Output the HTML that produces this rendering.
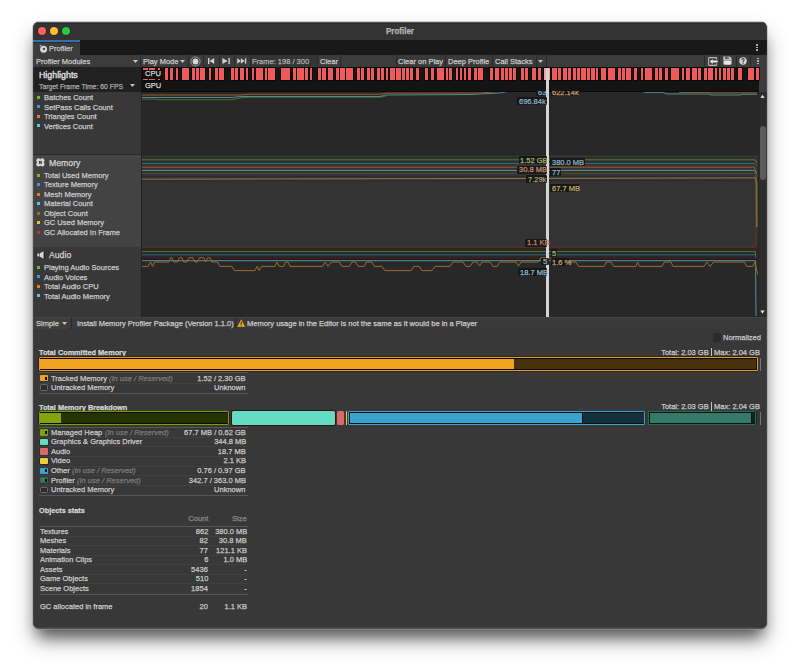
<!DOCTYPE html>
<html><head><meta charset="utf-8">
<style>
*{margin:0;padding:0;box-sizing:border-box}
html,body{width:800px;height:672px;overflow:hidden;background:#ffffff}
body{font-family:"Liberation Sans",sans-serif;font-size:7.5px;color:#c4c4c4;position:relative}
.a{position:absolute}
.t{position:absolute;white-space:nowrap;line-height:1;-webkit-text-stroke:0.25px currentColor}
#shadow{position:absolute;left:33px;top:22px;width:734px;height:606.5px;border-radius:6px;background:#383838;box-shadow:0 0 0 1px rgba(150,150,150,.45),0 12px 14px -5px rgba(0,0,0,.45),0 12px 22px -2px rgba(0,0,0,.42)}
#rim{position:absolute;left:33px;top:22px;width:734px;height:606.5px;border-radius:6px;box-shadow:inset 0 0 0 1px rgba(255,255,255,.05),inset 0 -1.5px 0 0 rgba(255,255,255,.1)}
#win{position:absolute;left:0;top:0;width:800px;height:672px;clip-path:inset(22px 33px 43.5px 33px round 6px)}
</style></head>
<body>
<div id="shadow"></div>
<div id="win">
<div class="a" style="left:33px;top:22px;width:734.00px;height:18.00px;background:#333333;"></div>
<div class="a" style="left:33px;top:22px;width:734.00px;height:1.20px;background:#4a4a4a;"></div>
<div class="a" style="left:33px;top:23.2px;width:734.00px;height:0.80px;background:#2a2a2a;"></div>
<div class="a" style="left:37.8px;top:26.8px;width:8.4px;height:8.4px;border-radius:50%;background:#fe5f57;box-shadow:0 0 0 0.6px rgba(0,0,0,.35)"></div>
<div class="a" style="left:49.8px;top:26.8px;width:8.4px;height:8.4px;border-radius:50%;background:#febc2e;box-shadow:0 0 0 0.6px rgba(0,0,0,.35)"></div>
<div class="a" style="left:61.8px;top:26.8px;width:8.4px;height:8.4px;border-radius:50%;background:#28c840;box-shadow:0 0 0 0.6px rgba(0,0,0,.35)"></div>
<div class="t" style="top:27.38px;font-size:8.53px;color:#b4b4b4;transform:scaleX(0.9375);transform-origin:50% 0;font-weight:bold;left:200.00px;width:400px;text-align:center;">Profiler</div>
<div class="a" style="left:33px;top:40px;width:734.00px;height:15.00px;background:#191919;"></div>
<div class="a" style="left:33px;top:40px;width:47.00px;height:15.00px;background:#3c3c3c;"></div>
<div class="a" style="left:33px;top:40.2px;width:47.00px;height:1.70px;background:#3470b0;"></div>
<div class="a" style="left:33px;top:41.9px;width:47.00px;height:0.60px;background:#2e2a22;"></div>
<svg class="a" style="left:38.6px;top:44.2px" width="9" height="9" viewBox="0 0 9 9"><circle cx="4.6" cy="5.2" r="3.5" fill="#d4d4d4"/><circle cx="4.9" cy="4.9" r="1.1" fill="#3a3a3a"/><path d="M0.9 1.1 L2.4 2.4" stroke="#c8c8c8" stroke-width="1.2"/></svg>
<div class="t" style="top:44.83px;font-size:8.00px;color:#c8c8c8;transform:scaleX(0.9375);transform-origin:0 0;left:48.60px;">Profiler</div>
<div class="a" style="left:756.2px;top:44.2px;width:1.6px;height:1.6px;border-radius:50%;background:#c8c8c8"></div>
<div class="a" style="left:756.2px;top:46.6px;width:1.6px;height:1.6px;border-radius:50%;background:#c8c8c8"></div>
<div class="a" style="left:756.2px;top:49.0px;width:1.6px;height:1.6px;border-radius:50%;background:#c8c8c8"></div>
<div class="a" style="left:33px;top:55px;width:734.00px;height:12.00px;background:#3c3c3c;"></div>
<div class="a" style="left:33px;top:66.5px;width:734.00px;height:1.00px;background:#1a1a1a;"></div>
<div class="t" style="top:57.93px;font-size:8.00px;color:#cbcbcb;transform:scaleX(0.9375);transform-origin:0 0;left:36.00px;">Profiler Modules</div>
<svg class="a" style="left:133.2px;top:59.5px" width="5" height="3" viewBox="0 0 5 3"><path d="M0 0 L5 0 L2.5 3 Z" fill="#c4c4c4"/></svg>
<div class="a" style="left:140px;top:55px;width:1.00px;height:11.50px;background:#2a2a2a;"></div>
<div class="t" style="top:57.93px;font-size:8.00px;color:#cbcbcb;transform:scaleX(0.9375);transform-origin:0 0;left:142.70px;">Play Mode</div>
<svg class="a" style="left:180.3px;top:59.5px" width="5" height="3" viewBox="0 0 5 3"><path d="M0 0 L5 0 L2.5 3 Z" fill="#c4c4c4"/></svg>
<div class="a" style="left:187.5px;top:55px;width:1.00px;height:11.50px;background:#2a2a2a;"></div>
<svg class="a" style="left:189.6px;top:55.5px" width="11" height="11" viewBox="0 0 11 11"><circle cx="5.5" cy="5.5" r="4.6" fill="none" stroke="#b4b4b4" stroke-width="0.75"/><circle cx="5.5" cy="5.5" r="2.9" fill="#d8d8d8"/></svg>
<div class="a" style="left:203px;top:55px;width:1.00px;height:11.50px;background:#2a2a2a;"></div>
<svg class="a" style="left:207px;top:57px" width="9" height="8" viewBox="0 0 9 8"><rect x="1" y="1" width="1.4" height="6" fill="#d0d0d0"/><path d="M7.2 1 L2.6 4 L7.2 7 Z" fill="#d0d0d0"/></svg>
<div class="a" style="left:218.5px;top:55px;width:1.00px;height:11.50px;background:#2a2a2a;"></div>
<svg class="a" style="left:222px;top:57px" width="9" height="8" viewBox="0 0 9 8"><path d="M0.4 1 L5.6 4 L0.4 7 Z" fill="#d0d0d0"/><rect x="6.4" y="1" width="1.4" height="6" fill="#d0d0d0"/></svg>
<div class="a" style="left:234px;top:55px;width:1.00px;height:11.50px;background:#2a2a2a;"></div>
<svg class="a" style="left:237px;top:57px" width="10" height="8" viewBox="0 0 10 8"><path d="M0.2 1.3 L3.9 4 L0.2 6.7 Z" fill="#d0d0d0"/><path d="M3.9 1.3 L7.6 4 L3.9 6.7 Z" fill="#d0d0d0"/><rect x="7.9" y="1.3" width="1.3" height="5.4" fill="#d0d0d0"/></svg>
<div class="a" style="left:249.5px;top:55px;width:1.00px;height:11.50px;background:#2a2a2a;"></div>
<div class="a" style="left:250.5px;top:55px;width:66.50px;height:11.50px;background:#353535;"></div>
<div class="t" style="top:57.93px;font-size:8.00px;color:#b0b0b0;transform:scaleX(0.9375);transform-origin:0 0;left:251.70px;">Frame: 198 / 300</div>
<div class="a" style="left:317px;top:55px;width:1.00px;height:11.50px;background:#2a2a2a;"></div>
<div class="t" style="top:57.93px;font-size:8.00px;color:#cbcbcb;transform:scaleX(0.9375);transform-origin:0 0;left:320.20px;">Clear</div>
<div class="a" style="left:339.5px;top:55px;width:1.00px;height:11.50px;background:#2a2a2a;"></div>
<div class="a" style="left:395.5px;top:55px;width:150.00px;height:11.50px;background:#3a3a3a;"></div>
<div class="a" style="left:395.5px;top:55px;width:1.00px;height:11.50px;background:#2a2a2a;"></div>
<div class="t" style="top:57.93px;font-size:8.00px;color:#cbcbcb;transform:scaleX(0.9375);transform-origin:0 0;left:397.50px;">Clear on Play</div>
<div class="a" style="left:445px;top:55px;width:1.00px;height:11.50px;background:#2a2a2a;"></div>
<div class="t" style="top:57.93px;font-size:8.00px;color:#cbcbcb;transform:scaleX(0.9375);transform-origin:0 0;left:448.00px;">Deep Profile</div>
<div class="a" style="left:492px;top:55px;width:1.00px;height:11.50px;background:#2a2a2a;"></div>
<div class="t" style="top:57.93px;font-size:8.00px;color:#cbcbcb;transform:scaleX(0.9375);transform-origin:0 0;left:494.90px;">Call Stacks</div>
<div class="a" style="left:535.5px;top:55px;width:1.00px;height:11.50px;background:#2a2a2a;"></div>
<svg class="a" style="left:537.8px;top:59.5px" width="5" height="3" viewBox="0 0 5 3"><path d="M0 0 L5 0 L2.5 3 Z" fill="#c4c4c4"/></svg>
<div class="a" style="left:545.5px;top:55px;width:1.00px;height:11.50px;background:#2a2a2a;"></div>
<div class="a" style="left:704px;top:55px;width:1.00px;height:11.50px;background:#2a2a2a;"></div>
<div class="a" style="left:719px;top:55px;width:1.00px;height:11.50px;background:#2a2a2a;"></div>
<div class="a" style="left:735.5px;top:55px;width:1.00px;height:11.50px;background:#2a2a2a;"></div>
<div class="a" style="left:750px;top:55px;width:1.00px;height:11.50px;background:#2a2a2a;"></div>
<svg class="a" style="left:707.8px;top:56.8px" width="10" height="9" viewBox="0 0 10 9"><path d="M8.6 2.6 V1.4 Q8.6 0.6 7.8 0.6 H1.4 Q0.6 0.6 0.6 1.4 V7.6 Q0.6 8.4 1.4 8.4 H7.8 Q8.6 8.4 8.6 7.6 V6.4" fill="none" stroke="#b8b8b8" stroke-width="1.1"/><path d="M1.8 4.5 L4.6 2 V3.6 H9.6 V5.4 H4.6 V7 Z" fill="#ececec"/></svg>
<svg class="a" style="left:722.6px;top:56.4px" width="9" height="9" viewBox="0 0 9 9"><path d="M0.4 0.4 H6.8 L8.6 2.2 V8.6 H0.4 Z" fill="#cfcfcf"/><rect x="2.2" y="0.4" width="4" height="2.6" fill="#505050"/><rect x="4.6" y="0.9" width="1" height="1.6" fill="#cfcfcf"/><rect x="1.6" y="4.6" width="5.8" height="4" fill="#e8e8e8"/><path d="M0.4 4.2 H8.6" stroke="#606060" stroke-width="0.6"/></svg>
<svg class="a" style="left:738.6px;top:57px" width="8" height="8" viewBox="0 0 8 8"><circle cx="4" cy="4" r="3.7" fill="#d4d4d4"/><path d="M2.7 3 Q2.7 1.6 4 1.6 Q5.3 1.6 5.3 2.9 Q5.3 3.7 4.1 4.1 V5" fill="none" stroke="#2a2a2a" stroke-width="1"/><rect x="3.55" y="5.6" width="1.1" height="1.1" fill="#2a2a2a"/></svg>
<div class="a" style="left:757.2px;top:57.8px;width:1.6px;height:1.6px;border-radius:50%;background:#c8c8c8"></div>
<div class="a" style="left:757.2px;top:60.199999999999996px;width:1.6px;height:1.6px;border-radius:50%;background:#c8c8c8"></div>
<div class="a" style="left:757.2px;top:62.599999999999994px;width:1.6px;height:1.6px;border-radius:50%;background:#c8c8c8"></div>
<div class="a" style="left:33px;top:67px;width:108.00px;height:25.00px;background:#212121;"></div>
<div class="a" style="left:141px;top:67px;width:618.00px;height:25.00px;background:#141414;"></div>
<div class="a" style="left:141px;top:90.8px;width:618.00px;height:1.20px;background:#0a0a0a;"></div>
<div class="a" style="left:759px;top:67px;width:8.00px;height:25.00px;background:#3c3c3c;"></div>
<div class="t" style="top:69.97px;font-size:9.60px;color:#dadada;transform:scaleX(0.9200);transform-origin:0 0;left:39.00px;-webkit-text-stroke:0.45px #dadada;">Highlights</div>
<div class="t" style="top:83.11px;font-size:7.31px;color:#a8a8a8;transform:scaleX(0.9375);transform-origin:0 0;left:39.00px;">Target Frame Time: 60 FPS</div>
<svg class="a" style="left:130.0px;top:84.0px" width="5" height="3" viewBox="0 0 5 3"><path d="M0 0 L5 0 L2.5 3 Z" fill="#c4c4c4"/></svg>
<div class="a" style="left:142.5px;top:68px;width:5.00px;height:12.00px;background:#f05a5a;box-shadow:0 0 0 0.7px #060606"></div>
<div class="a" style="left:149.0px;top:68px;width:5.50px;height:12.00px;background:#f05a5a;box-shadow:0 0 0 0.7px #060606"></div>
<div class="a" style="left:157.5px;top:68px;width:2.00px;height:12.00px;background:#f05a5a;box-shadow:0 0 0 0.7px #060606"></div>
<div class="a" style="left:165.0px;top:68px;width:3.00px;height:12.00px;background:#f05a5a;box-shadow:0 0 0 0.7px #060606"></div>
<div class="a" style="left:169.5px;top:68px;width:3.00px;height:12.00px;background:#f05a5a;box-shadow:0 0 0 0.7px #060606"></div>
<div class="a" style="left:175.5px;top:68px;width:2.50px;height:12.00px;background:#f05a5a;box-shadow:0 0 0 0.7px #060606"></div>
<div class="a" style="left:182.0px;top:68px;width:6.50px;height:12.00px;background:#f05a5a;box-shadow:0 0 0 0.7px #060606"></div>
<div class="a" style="left:192.0px;top:68px;width:3.00px;height:12.00px;background:#f05a5a;box-shadow:0 0 0 0.7px #060606"></div>
<div class="a" style="left:196.0px;top:68px;width:3.00px;height:12.00px;background:#f05a5a;box-shadow:0 0 0 0.7px #060606"></div>
<div class="a" style="left:200.0px;top:68px;width:5.00px;height:12.00px;background:#f05a5a;box-shadow:0 0 0 0.7px #060606"></div>
<div class="a" style="left:209.0px;top:68px;width:2.00px;height:12.00px;background:#f05a5a;box-shadow:0 0 0 0.7px #060606"></div>
<div class="a" style="left:215.0px;top:68px;width:2.50px;height:12.00px;background:#f05a5a;box-shadow:0 0 0 0.7px #060606"></div>
<div class="a" style="left:219.0px;top:68px;width:5.00px;height:12.00px;background:#f05a5a;box-shadow:0 0 0 0.7px #060606"></div>
<div class="a" style="left:231.0px;top:68px;width:3.50px;height:12.00px;background:#f05a5a;box-shadow:0 0 0 0.7px #060606"></div>
<div class="a" style="left:235.0px;top:68px;width:3.00px;height:12.00px;background:#f05a5a;box-shadow:0 0 0 0.7px #060606"></div>
<div class="a" style="left:239.5px;top:68px;width:4.50px;height:12.00px;background:#f05a5a;box-shadow:0 0 0 0.7px #060606"></div>
<div class="a" style="left:245.5px;top:68px;width:2.50px;height:12.00px;background:#f05a5a;box-shadow:0 0 0 0.7px #060606"></div>
<div class="a" style="left:252.0px;top:68px;width:2.00px;height:12.00px;background:#f05a5a;box-shadow:0 0 0 0.7px #060606"></div>
<div class="a" style="left:255.5px;top:68px;width:7.00px;height:12.00px;background:#f05a5a;box-shadow:0 0 0 0.7px #060606"></div>
<div class="a" style="left:264.5px;top:68px;width:2.50px;height:12.00px;background:#f05a5a;box-shadow:0 0 0 0.7px #060606"></div>
<div class="a" style="left:268.0px;top:68px;width:7.00px;height:12.00px;background:#f05a5a;box-shadow:0 0 0 0.7px #060606"></div>
<div class="a" style="left:280.5px;top:68px;width:9.00px;height:12.00px;background:#f05a5a;box-shadow:0 0 0 0.7px #060606"></div>
<div class="a" style="left:293.0px;top:68px;width:2.50px;height:12.00px;background:#f05a5a;box-shadow:0 0 0 0.7px #060606"></div>
<div class="a" style="left:297.0px;top:68px;width:7.00px;height:12.00px;background:#f05a5a;box-shadow:0 0 0 0.7px #060606"></div>
<div class="a" style="left:305.0px;top:68px;width:3.00px;height:12.00px;background:#f05a5a;box-shadow:0 0 0 0.7px #060606"></div>
<div class="a" style="left:309.5px;top:68px;width:2.50px;height:12.00px;background:#f05a5a;box-shadow:0 0 0 0.7px #060606"></div>
<div class="a" style="left:317.5px;top:68px;width:3.00px;height:12.00px;background:#f05a5a;box-shadow:0 0 0 0.7px #060606"></div>
<div class="a" style="left:322.0px;top:68px;width:4.00px;height:12.00px;background:#f05a5a;box-shadow:0 0 0 0.7px #060606"></div>
<div class="a" style="left:327.5px;top:68px;width:5.00px;height:12.00px;background:#f05a5a;box-shadow:0 0 0 0.7px #060606"></div>
<div class="a" style="left:336.0px;top:68px;width:3.00px;height:12.00px;background:#f05a5a;box-shadow:0 0 0 0.7px #060606"></div>
<div class="a" style="left:340.0px;top:68px;width:5.00px;height:12.00px;background:#f05a5a;box-shadow:0 0 0 0.7px #060606"></div>
<div class="a" style="left:346.0px;top:68px;width:7.00px;height:12.00px;background:#f05a5a;box-shadow:0 0 0 0.7px #060606"></div>
<div class="a" style="left:357.0px;top:68px;width:2.50px;height:12.00px;background:#f05a5a;box-shadow:0 0 0 0.7px #060606"></div>
<div class="a" style="left:360.5px;top:68px;width:3.50px;height:12.00px;background:#f05a5a;box-shadow:0 0 0 0.7px #060606"></div>
<div class="a" style="left:367.0px;top:68px;width:3.00px;height:12.00px;background:#f05a5a;box-shadow:0 0 0 0.7px #060606"></div>
<div class="a" style="left:371.0px;top:68px;width:3.00px;height:12.00px;background:#f05a5a;box-shadow:0 0 0 0.7px #060606"></div>
<div class="a" style="left:377.0px;top:68px;width:3.00px;height:12.00px;background:#f05a5a;box-shadow:0 0 0 0.7px #060606"></div>
<div class="a" style="left:381.0px;top:68px;width:3.00px;height:12.00px;background:#f05a5a;box-shadow:0 0 0 0.7px #060606"></div>
<div class="a" style="left:385.5px;top:68px;width:2.50px;height:12.00px;background:#f05a5a;box-shadow:0 0 0 0.7px #060606"></div>
<div class="a" style="left:390.0px;top:68px;width:5.00px;height:12.00px;background:#f05a5a;box-shadow:0 0 0 0.7px #060606"></div>
<div class="a" style="left:396.0px;top:68px;width:4.50px;height:12.00px;background:#f05a5a;box-shadow:0 0 0 0.7px #060606"></div>
<div class="a" style="left:402.0px;top:68px;width:3.00px;height:12.00px;background:#f05a5a;box-shadow:0 0 0 0.7px #060606"></div>
<div class="a" style="left:406.0px;top:68px;width:3.00px;height:12.00px;background:#f05a5a;box-shadow:0 0 0 0.7px #060606"></div>
<div class="a" style="left:410.0px;top:68px;width:3.00px;height:12.00px;background:#f05a5a;box-shadow:0 0 0 0.7px #060606"></div>
<div class="a" style="left:416.0px;top:68px;width:3.00px;height:12.00px;background:#f05a5a;box-shadow:0 0 0 0.7px #060606"></div>
<div class="a" style="left:424.5px;top:68px;width:3.00px;height:12.00px;background:#f05a5a;box-shadow:0 0 0 0.7px #060606"></div>
<div class="a" style="left:431.0px;top:68px;width:2.50px;height:12.00px;background:#f05a5a;box-shadow:0 0 0 0.7px #060606"></div>
<div class="a" style="left:437.0px;top:68px;width:7.00px;height:12.00px;background:#f05a5a;box-shadow:0 0 0 0.7px #060606"></div>
<div class="a" style="left:445.5px;top:68px;width:2.00px;height:12.00px;background:#f05a5a;box-shadow:0 0 0 0.7px #060606"></div>
<div class="a" style="left:449.0px;top:68px;width:3.00px;height:12.00px;background:#f05a5a;box-shadow:0 0 0 0.7px #060606"></div>
<div class="a" style="left:455.5px;top:68px;width:2.50px;height:12.00px;background:#f05a5a;box-shadow:0 0 0 0.7px #060606"></div>
<div class="a" style="left:460.0px;top:68px;width:2.00px;height:12.00px;background:#f05a5a;box-shadow:0 0 0 0.7px #060606"></div>
<div class="a" style="left:464.0px;top:68px;width:2.00px;height:12.00px;background:#f05a5a;box-shadow:0 0 0 0.7px #060606"></div>
<div class="a" style="left:467.5px;top:68px;width:3.00px;height:12.00px;background:#f05a5a;box-shadow:0 0 0 0.7px #060606"></div>
<div class="a" style="left:474.0px;top:68px;width:2.50px;height:12.00px;background:#f05a5a;box-shadow:0 0 0 0.7px #060606"></div>
<div class="a" style="left:478.0px;top:68px;width:5.00px;height:12.00px;background:#f05a5a;box-shadow:0 0 0 0.7px #060606"></div>
<div class="a" style="left:490.0px;top:68px;width:3.00px;height:12.00px;background:#f05a5a;box-shadow:0 0 0 0.7px #060606"></div>
<div class="a" style="left:494.5px;top:68px;width:4.50px;height:12.00px;background:#f05a5a;box-shadow:0 0 0 0.7px #060606"></div>
<div class="a" style="left:500.5px;top:68px;width:3.00px;height:12.00px;background:#f05a5a;box-shadow:0 0 0 0.7px #060606"></div>
<div class="a" style="left:505.0px;top:68px;width:2.50px;height:12.00px;background:#f05a5a;box-shadow:0 0 0 0.7px #060606"></div>
<div class="a" style="left:509.0px;top:68px;width:3.00px;height:12.00px;background:#f05a5a;box-shadow:0 0 0 0.7px #060606"></div>
<div class="a" style="left:513.0px;top:68px;width:3.00px;height:12.00px;background:#f05a5a;box-shadow:0 0 0 0.7px #060606"></div>
<div class="a" style="left:521.0px;top:68px;width:3.00px;height:12.00px;background:#f05a5a;box-shadow:0 0 0 0.7px #060606"></div>
<div class="a" style="left:525.0px;top:68px;width:3.00px;height:12.00px;background:#f05a5a;box-shadow:0 0 0 0.7px #060606"></div>
<div class="a" style="left:531.5px;top:68px;width:4.50px;height:12.00px;background:#f05a5a;box-shadow:0 0 0 0.7px #060606"></div>
<div class="a" style="left:538.0px;top:68px;width:2.50px;height:12.00px;background:#f05a5a;box-shadow:0 0 0 0.7px #060606"></div>
<div class="a" style="left:543.5px;top:68px;width:6.00px;height:12.00px;background:#f6a0a0;box-shadow:0 0 0 0.7px #060606"></div>
<div class="a" style="left:552.0px;top:68px;width:5.00px;height:12.00px;background:#f05a5a;box-shadow:0 0 0 0.7px #060606"></div>
<div class="a" style="left:558.0px;top:68px;width:2.50px;height:12.00px;background:#f05a5a;box-shadow:0 0 0 0.7px #060606"></div>
<div class="a" style="left:562.5px;top:68px;width:4.50px;height:12.00px;background:#f05a5a;box-shadow:0 0 0 0.7px #060606"></div>
<div class="a" style="left:568.0px;top:68px;width:3.00px;height:12.00px;background:#f05a5a;box-shadow:0 0 0 0.7px #060606"></div>
<div class="a" style="left:573.0px;top:68px;width:2.50px;height:12.00px;background:#f05a5a;box-shadow:0 0 0 0.7px #060606"></div>
<div class="a" style="left:577.0px;top:68px;width:2.50px;height:12.00px;background:#f05a5a;box-shadow:0 0 0 0.7px #060606"></div>
<div class="a" style="left:581.0px;top:68px;width:4.50px;height:12.00px;background:#f05a5a;box-shadow:0 0 0 0.7px #060606"></div>
<div class="a" style="left:587.0px;top:68px;width:3.00px;height:12.00px;background:#f05a5a;box-shadow:0 0 0 0.7px #060606"></div>
<div class="a" style="left:591.0px;top:68px;width:3.50px;height:12.00px;background:#f05a5a;box-shadow:0 0 0 0.7px #060606"></div>
<div class="a" style="left:595.5px;top:68px;width:2.50px;height:12.00px;background:#f05a5a;box-shadow:0 0 0 0.7px #060606"></div>
<div class="a" style="left:601.0px;top:68px;width:5.00px;height:12.00px;background:#f05a5a;box-shadow:0 0 0 0.7px #060606"></div>
<div class="a" style="left:608.0px;top:68px;width:7.00px;height:12.00px;background:#f05a5a;box-shadow:0 0 0 0.7px #060606"></div>
<div class="a" style="left:618.0px;top:68px;width:2.50px;height:12.00px;background:#f05a5a;box-shadow:0 0 0 0.7px #060606"></div>
<div class="a" style="left:622.0px;top:68px;width:3.00px;height:12.00px;background:#f05a5a;box-shadow:0 0 0 0.7px #060606"></div>
<div class="a" style="left:626.0px;top:68px;width:5.00px;height:12.00px;background:#f05a5a;box-shadow:0 0 0 0.7px #060606"></div>
<div class="a" style="left:634.0px;top:68px;width:3.00px;height:12.00px;background:#f05a5a;box-shadow:0 0 0 0.7px #060606"></div>
<div class="a" style="left:640.5px;top:68px;width:2.50px;height:12.00px;background:#f05a5a;box-shadow:0 0 0 0.7px #060606"></div>
<div class="a" style="left:645.0px;top:68px;width:6.50px;height:12.00px;background:#f05a5a;box-shadow:0 0 0 0.7px #060606"></div>
<div class="a" style="left:655.0px;top:68px;width:2.50px;height:12.00px;background:#f05a5a;box-shadow:0 0 0 0.7px #060606"></div>
<div class="a" style="left:659.0px;top:68px;width:3.00px;height:12.00px;background:#f05a5a;box-shadow:0 0 0 0.7px #060606"></div>
<div class="a" style="left:665.0px;top:68px;width:3.00px;height:12.00px;background:#f05a5a;box-shadow:0 0 0 0.7px #060606"></div>
<div class="a" style="left:671.0px;top:68px;width:7.50px;height:12.00px;background:#f05a5a;box-shadow:0 0 0 0.7px #060606"></div>
<div class="a" style="left:682.0px;top:68px;width:2.00px;height:12.00px;background:#f05a5a;box-shadow:0 0 0 0.7px #060606"></div>
<div class="a" style="left:685.5px;top:68px;width:4.50px;height:12.00px;background:#f05a5a;box-shadow:0 0 0 0.7px #060606"></div>
<div class="a" style="left:692.0px;top:68px;width:5.00px;height:12.00px;background:#f05a5a;box-shadow:0 0 0 0.7px #060606"></div>
<div class="a" style="left:698.0px;top:68px;width:3.00px;height:12.00px;background:#f05a5a;box-shadow:0 0 0 0.7px #060606"></div>
<div class="a" style="left:704.0px;top:68px;width:3.00px;height:12.00px;background:#f05a5a;box-shadow:0 0 0 0.7px #060606"></div>
<div class="a" style="left:708.0px;top:68px;width:5.00px;height:12.00px;background:#f05a5a;box-shadow:0 0 0 0.7px #060606"></div>
<div class="a" style="left:715.0px;top:68px;width:2.00px;height:12.00px;background:#f05a5a;box-shadow:0 0 0 0.7px #060606"></div>
<div class="a" style="left:719.0px;top:68px;width:2.00px;height:12.00px;background:#f05a5a;box-shadow:0 0 0 0.7px #060606"></div>
<div class="a" style="left:723.0px;top:68px;width:3.00px;height:12.00px;background:#f05a5a;box-shadow:0 0 0 0.7px #060606"></div>
<div class="a" style="left:727.0px;top:68px;width:3.00px;height:12.00px;background:#f05a5a;box-shadow:0 0 0 0.7px #060606"></div>
<div class="a" style="left:731.0px;top:68px;width:3.00px;height:12.00px;background:#f05a5a;box-shadow:0 0 0 0.7px #060606"></div>
<div class="a" style="left:737.5px;top:68px;width:4.50px;height:12.00px;background:#f05a5a;box-shadow:0 0 0 0.7px #060606"></div>
<div class="a" style="left:748.0px;top:68px;width:6.00px;height:12.00px;background:#f05a5a;box-shadow:0 0 0 0.7px #060606"></div>
<div class="a" style="left:756.0px;top:68px;width:2.50px;height:12.00px;background:#f05a5a;box-shadow:0 0 0 0.7px #060606"></div>
<div class="a" style="left:142px;top:69.5px;width:20.00px;height:9.00px;background:#0e0e0e;border-radius:1px"></div>
<div class="t" style="top:70.43px;font-size:8.00px;color:#d8d8d8;transform:scaleX(0.9375);transform-origin:0 0;left:145.00px;">CPU</div>
<div class="a" style="left:142px;top:81.8px;width:20.00px;height:7.80px;background:#0e0e0e;border-radius:1px"></div>
<div class="t" style="top:81.93px;font-size:8.00px;color:#d8d8d8;transform:scaleX(0.9375);transform-origin:0 0;left:145.00px;">GPU</div>
<!--CHARTS-->
<div class="a" style="left:33px;top:92px;width:108.00px;height:62.00px;background:#383838;"></div>
<div class="a" style="left:33px;top:154px;width:108.00px;height:1.00px;background:#2a2a2a;"></div>
<div class="a" style="left:33px;top:155px;width:108.00px;height:92.00px;background:#434343;"></div>
<div class="a" style="left:33px;top:155.6px;width:107.00px;height:1.00px;background:#4a4a4a;"></div>
<div class="a" style="left:33px;top:247px;width:108.00px;height:69.50px;background:#383838;"></div>
<div class="a" style="left:140.5px;top:92px;width:1.00px;height:224.50px;background:#232323;"></div>
<div class="a" style="left:37px;top:95.8px;width:3.00px;height:3.00px;background:#84b21a;"></div>
<div class="t" style="top:94.23px;font-size:8.00px;color:#cbcbcb;transform:scaleX(0.9375);transform-origin:0 0;left:43.80px;">Batches Count</div>
<div class="a" style="left:37px;top:105.3px;width:3.00px;height:3.00px;background:#3a9ad4;"></div>
<div class="t" style="top:103.73px;font-size:8.00px;color:#cbcbcb;transform:scaleX(0.9375);transform-origin:0 0;left:43.80px;">SetPass Calls Count</div>
<div class="a" style="left:37px;top:114.8px;width:3.00px;height:3.00px;background:#e8801a;"></div>
<div class="t" style="top:113.23px;font-size:8.00px;color:#cbcbcb;transform:scaleX(0.9375);transform-origin:0 0;left:43.80px;">Triangles Count</div>
<div class="a" style="left:37px;top:124.30000000000001px;width:3.00px;height:3.00px;background:#56c8dc;"></div>
<div class="t" style="top:122.73px;font-size:8.00px;color:#cbcbcb;transform:scaleX(0.9375);transform-origin:0 0;left:43.80px;">Vertices Count</div>
<svg class="a" style="left:36.2px;top:157.9px" width="9" height="9" viewBox="0 0 9 9"><g fill="#d6d6d6"><circle cx="2.5" cy="2.5" r="2.2"/><circle cx="6.3" cy="2.5" r="2.2"/><circle cx="2.5" cy="6.3" r="2.2"/><circle cx="6.3" cy="6.3" r="2.2"/><rect x="1.4" y="1.4" width="6" height="6"/></g><g fill="#1a1a1a"><circle cx="3.7" cy="3.7" r="0.8"/><circle cx="5.1" cy="3.7" r="0.8"/><circle cx="3.7" cy="5.1" r="0.8"/><circle cx="5.1" cy="5.1" r="0.8"/></g></svg>
<div class="t" style="top:158.94px;font-size:9.28px;color:#d4d4d4;transform:scaleX(0.9375);transform-origin:0 0;left:48.60px;">Memory</div>
<div class="a" style="left:37px;top:173.5px;width:3.00px;height:3.00px;background:#84b21a;"></div>
<div class="t" style="top:171.93px;font-size:8.00px;color:#cbcbcb;transform:scaleX(0.9375);transform-origin:0 0;left:43.80px;">Total Used Memory</div>
<div class="a" style="left:37px;top:183.0px;width:3.00px;height:3.00px;background:#3a9ad4;"></div>
<div class="t" style="top:181.43px;font-size:8.00px;color:#cbcbcb;transform:scaleX(0.9375);transform-origin:0 0;left:43.80px;">Texture Memory</div>
<div class="a" style="left:37px;top:192.5px;width:3.00px;height:3.00px;background:#e8801a;"></div>
<div class="t" style="top:190.93px;font-size:8.00px;color:#cbcbcb;transform:scaleX(0.9375);transform-origin:0 0;left:43.80px;">Mesh Memory</div>
<div class="a" style="left:37px;top:202.0px;width:3.00px;height:3.00px;background:#56c8dc;"></div>
<div class="t" style="top:200.43px;font-size:8.00px;color:#cbcbcb;transform:scaleX(0.9375);transform-origin:0 0;left:43.80px;">Material Count</div>
<div class="a" style="left:37px;top:211.5px;width:3.00px;height:3.00px;background:#8c7a10;"></div>
<div class="t" style="top:209.93px;font-size:8.00px;color:#cbcbcb;transform:scaleX(0.9375);transform-origin:0 0;left:43.80px;">Object Count</div>
<div class="a" style="left:37px;top:221.0px;width:3.00px;height:3.00px;background:#e8c41a;"></div>
<div class="t" style="top:219.43px;font-size:8.00px;color:#cbcbcb;transform:scaleX(0.9375);transform-origin:0 0;left:43.80px;">GC Used Memory</div>
<div class="a" style="left:37px;top:230.5px;width:3.00px;height:3.00px;background:#b8381a;"></div>
<div class="t" style="top:228.93px;font-size:8.00px;color:#cbcbcb;transform:scaleX(0.9375);transform-origin:0 0;left:43.80px;">GC Allocated In Frame</div>
<svg class="a" style="left:36.6px;top:250.9px" width="8" height="8" viewBox="0 0 8 8"><rect x="0.4" y="2.6" width="1.6" height="2.8" fill="#e0e0e0"/><path d="M2.6 2.4 L6.6 0.2 V7.8 L2.6 5.6 Z" fill="#d8d8d8"/><rect x="6.9" y="0.6" width="0.8" height="6.8" fill="#1a1a1a"/></svg>
<div class="t" style="top:251.14px;font-size:9.28px;color:#d4d4d4;transform:scaleX(0.9375);transform-origin:0 0;left:48.60px;">Audio</div>
<div class="a" style="left:37px;top:265.8px;width:3.00px;height:3.00px;background:#84b21a;"></div>
<div class="t" style="top:264.23px;font-size:8.00px;color:#cbcbcb;transform:scaleX(0.9375);transform-origin:0 0;left:43.80px;">Playing Audio Sources</div>
<div class="a" style="left:37px;top:275.3px;width:3.00px;height:3.00px;background:#3a9ad4;"></div>
<div class="t" style="top:273.73px;font-size:8.00px;color:#cbcbcb;transform:scaleX(0.9375);transform-origin:0 0;left:43.80px;">Audio Voices</div>
<div class="a" style="left:37px;top:284.8px;width:3.00px;height:3.00px;background:#e8801a;"></div>
<div class="t" style="top:283.23px;font-size:8.00px;color:#cbcbcb;transform:scaleX(0.9375);transform-origin:0 0;left:43.80px;">Total Audio CPU</div>
<div class="a" style="left:37px;top:294.3px;width:3.00px;height:3.00px;background:#56c8dc;"></div>
<div class="t" style="top:292.73px;font-size:8.00px;color:#cbcbcb;transform:scaleX(0.9375);transform-origin:0 0;left:43.80px;">Total Audio Memory</div>
<div class="a" style="left:141.5px;top:92px;width:616.50px;height:62.00px;background:#282828;"></div>
<div class="a" style="left:141.5px;top:154px;width:616.50px;height:1.00px;background:#232323;"></div>
<div class="a" style="left:141.5px;top:155px;width:616.50px;height:92.00px;background:#333333;"></div>
<div class="a" style="left:141.5px;top:247px;width:616.50px;height:69.50px;background:#282828;"></div>
<div class="a" style="left:758px;top:92px;width:9.00px;height:224.50px;background:#2c2c2c;"></div>
<div class="a" style="left:758px;top:92px;width:1.00px;height:224.50px;background:#252525;"></div>
<svg class="a" style="left:760.4px;top:93.9px" width="5" height="4.4" viewBox="0 0 5 4.4"><path d="M0.1 4.1 L4.9 4.1 L2.5 0.4 Z" fill="#e8e8e8" stroke="#111" stroke-width="0.3"/></svg>
<svg class="a" style="left:760.4px;top:310.2px" width="5" height="4.4" viewBox="0 0 5 4.4"><path d="M0.1 0.3 L4.9 0.3 L2.5 4 Z" fill="#e8e8e8" stroke="#111" stroke-width="0.3"/></svg>
<div class="a" style="left:760px;top:125.5px;width:6.00px;height:54.20px;background:#5c5c5c;border-radius:3px"></div>
<svg class="a" style="left:0;top:0" width="800" height="672" viewBox="0 0 800 672"><defs><clipPath id="c1"><rect x="141" y="92" width="617" height="62"/></clipPath></defs><g clip-path="url(#c1)"><polyline points="142,99.1 156,99.1 158,99.7 232,99.7 240,98 248,97.2 380,97.2 386,96" fill="none" stroke="#52701e" stroke-width="1" stroke-linejoin="miter"/><polyline points="142,97.5 232,97.5 240,96.5 380,96.5 386,95 470,94.5 500,93 510,91" fill="none" stroke="#4a8a9a" stroke-width="1" stroke-linejoin="miter"/><polyline points="142,95 240,95 248,94.3 380,94.3 386,93.2 480,93 505,91" fill="none" stroke="#9a5c2a" stroke-width="1" stroke-linejoin="miter"/><polyline points="640,91.2 646,92.4 663,92.4 667,94 708,94 712,95 740,95 743,94.3 757,94.3" fill="none" stroke="#4a8a9a" stroke-width="1" stroke-linejoin="miter"/><polyline points="679,92.3 708,92.3 711,92.9 757,92.9" fill="none" stroke="#9a6a28" stroke-width="1" stroke-linejoin="miter"/></g><polyline points="142,158.2 754,158.2" fill="none" stroke="#2a2a38" stroke-width="0.9" stroke-linejoin="miter"/><polyline points="142,161.6 754,161.6" fill="none" stroke="#2a2a38" stroke-width="0.9" stroke-linejoin="miter"/><polyline points="142,176.6 754,176.6" fill="none" stroke="#2a2a38" stroke-width="0.9" stroke-linejoin="miter"/><polyline points="142,180.6 754,180.6" fill="none" stroke="#2a2a38" stroke-width="0.9" stroke-linejoin="miter"/><polyline points="142,159.8 755,159.8 757,163" fill="none" stroke="#5a7a24" stroke-width="1" stroke-linejoin="miter"/><polyline points="142,163.5 755,163.5 757,166" fill="none" stroke="#33667c" stroke-width="1" stroke-linejoin="miter"/><polyline points="142,167.2 754.5,167.2 756,172 756.3,227" fill="none" stroke="#9a5e2c" stroke-width="1" stroke-linejoin="miter"/><polyline points="142,170.4 754,170.4 757,173" fill="none" stroke="#4e92a4" stroke-width="1" stroke-linejoin="miter"/><polyline points="142,173.4 755,173.4 757,176" fill="none" stroke="#544e26" stroke-width="1" stroke-linejoin="miter"/><polyline points="142,179.2 500,178.5 755,177.8 756.8,183 757,227" fill="none" stroke="#8e7a32" stroke-width="1" stroke-linejoin="miter"/><polyline points="142,247.2 755.8,247.2 756,227" fill="none" stroke="#6a2e20" stroke-width="1" stroke-linejoin="miter"/><polyline points="142,251.6 755.5,251.6 755.5,256" fill="none" stroke="#56762a" stroke-width="1" stroke-linejoin="miter"/><polyline points="142,254.8 755.5,254.8 756,258" fill="none" stroke="#33667c" stroke-width="1" stroke-linejoin="miter"/><polyline points="142,259.3 757,259.3" fill="none" stroke="#3e0c0c" stroke-width="1" stroke-linejoin="miter"/><polyline points="142,260.7 755.6,260.7 756,316" fill="none" stroke="#4e94a4" stroke-width="1" stroke-linejoin="miter"/><polyline points="142,266.4 148,266.4 150.6,262 152.5,266.4 154.4,262 168.75,262 170.6,257.8 171.9,257.8 173.75,262 177.5,262 179.4,257.8 181.9,257.8 183.75,262 186.9,262 188.75,257.8 193,257.8 195,262 197.5,262 199.4,257.8 203.75,257.8 205.6,262 207.5,257.8 210,257.8 211.9,262 217.5,262 220,266.4 231.9,266.4 234.4,270.6 255,270.6 257.25,266.2 259,270.4 261.5,266.4 275,266.4 276.9,262 279.4,266.4 283.75,266.4 285.6,262 288.1,262 290,266.4 322.5,266.4 325,262 328.1,266.4 331.25,262 339.4,262 341.9,266.4 349.4,266.4 351.9,262 355.6,262 358.1,266.4 364.4,266.4 366.25,262 371.9,262 374.4,266.4 381.9,266.4 385,270.6 411.25,270.6 413.75,266.4 419.4,266.4 421.9,270.6 432,270.6 435,266.4 450,266.4 453,262 463,262 466,266.4 470,266.4 473,262 477,262 479.5,266 482,262 490,262 493,266.4 497,266.4 500,262 516,262 518.5,266 521,262 538,262 541,257.8 549,257.8 560,262 576,262 578.5,266.4 604,266.4 606.5,262 611,262 613.5,266.4 636,266.4 637.5,262 639.5,266.4 662,266.4 664.5,262 671,262 673,266.4 704,266.4 706.8,262 710.2,266.4 713.6,262 744.6,262 746.7,266.4 752.8,266.4 754.9,262 757.7,274.4" fill="none" stroke="#a06a28" stroke-width="1" stroke-linejoin="miter"/></svg>
<div class="a" style="left:546.1px;top:67.5px;width:3.00px;height:249.00px;background:#d4d4d4;"></div>
<div class="a" style="left:517px;top:97.3px;width:29.90px;height:8.10px;background:rgba(22,22,22,0.92);border-radius:1px"></div>
<div class="t" style="top:98.33px;font-size:8.00px;color:#8cb4c0;transform:scaleX(0.9375);transform-origin:0 0;left:518.50px;">696.84k</div>
<div class="a" style="left:0;top:90.8px;width:800px;height:10px;overflow:hidden"><div class="a" style="left:0;top:-90.8px;width:800px;height:672px">
<div class="a" style="left:536px;top:88px;width:10.00px;height:8.00px;background:rgba(22,22,22,0.92);border-radius:1px"></div>
<div class="t" style="top:88.93px;font-size:8.00px;color:#8cb4c0;transform:scaleX(0.9375);transform-origin:0 0;left:537.50px;">63.</div>
<div class="a" style="left:550.5px;top:88px;width:28.50px;height:8.00px;background:rgba(22,22,22,0.92);border-radius:1px"></div>
<div class="t" style="top:88.93px;font-size:8.00px;color:#c8a070;transform:scaleX(0.9375);transform-origin:0 0;left:552.00px;">622.14k</div>
</div></div>
<div class="a" style="left:518.75px;top:156.25px;width:27.75px;height:7.50px;background:rgba(22,22,22,0.92);border-radius:1px"></div>
<div class="t" style="top:156.68px;font-size:8.00px;color:#a4b46c;transform:scaleX(0.9375);transform-origin:0 0;left:520.25px;">1.52 GB</div>
<div class="a" style="left:550px;top:158px;width:35.00px;height:8.00px;background:rgba(22,22,22,0.92);border-radius:1px"></div>
<div class="t" style="top:158.93px;font-size:8.00px;color:#90b0c4;transform:scaleX(0.9375);transform-origin:0 0;left:551.50px;">380.0 MB</div>
<div class="a" style="left:517px;top:165.5px;width:29.50px;height:8.00px;background:rgba(22,22,22,0.92);border-radius:1px"></div>
<div class="t" style="top:166.43px;font-size:8.00px;color:#c4906c;transform:scaleX(0.9375);transform-origin:0 0;left:518.50px;">30.8 MB</div>
<div class="a" style="left:550px;top:167.5px;width:10.60px;height:8.20px;background:rgba(22,22,22,0.92);border-radius:1px"></div>
<div class="t" style="top:168.63px;font-size:8.00px;color:#90bcc8;transform:scaleX(0.9375);transform-origin:0 0;left:551.50px;">77</div>
<div class="a" style="left:526px;top:175px;width:20.50px;height:8.00px;background:rgba(22,22,22,0.92);border-radius:1px"></div>
<div class="t" style="top:175.93px;font-size:8.00px;color:#a8a070;transform:scaleX(0.9375);transform-origin:0 0;left:527.50px;">7.29k</div>
<div class="a" style="left:550px;top:184.4px;width:29.00px;height:8.10px;background:rgba(22,22,22,0.92);border-radius:1px"></div>
<div class="t" style="top:185.43px;font-size:8.00px;color:#c0ac64;transform:scaleX(0.9375);transform-origin:0 0;left:551.50px;">67.7 MB</div>
<div class="a" style="left:525px;top:238.5px;width:21.90px;height:8.00px;background:rgba(22,22,22,0.92);border-radius:1px"></div>
<div class="t" style="top:239.43px;font-size:8.00px;color:#c4866c;transform:scaleX(0.9375);transform-origin:0 0;left:526.50px;">1.1 KB</div>
<div class="a" style="left:541.3px;top:257.9px;width:7.40px;height:7.50px;background:rgba(22,22,22,0.92);border-radius:1px"></div>
<div class="t" style="top:258.33px;font-size:8.00px;color:#90b0c4;transform:scaleX(0.9375);transform-origin:0 0;left:542.80px;">5</div>
<div class="a" style="left:518.2px;top:267.8px;width:29.20px;height:8.00px;background:rgba(22,22,22,0.92);border-radius:1px"></div>
<div class="t" style="top:268.73px;font-size:8.00px;color:#90bcc8;transform:scaleX(0.9375);transform-origin:0 0;left:519.70px;">18.7 MB</div>
<div class="a" style="left:550.5px;top:249px;width:6.00px;height:7.70px;background:rgba(22,22,22,0.92);border-radius:1px"></div>
<div class="t" style="top:249.63px;font-size:8.00px;color:#a8b46c;transform:scaleX(0.9375);transform-origin:0 0;left:552.00px;">5</div>
<div class="a" style="left:550.5px;top:258.2px;width:18.70px;height:8.30px;background:rgba(22,22,22,0.92);border-radius:1px"></div>
<div class="t" style="top:259.43px;font-size:8.00px;color:#c8a078;transform:scaleX(0.9375);transform-origin:0 0;left:552.00px;">1.6 %</div>
<!--HLFIX-->
<!--DETAIL-->
<div class="a" style="left:33px;top:316.5px;width:734.00px;height:0.70px;background:#232323;"></div>
<div class="a" style="left:33px;top:317.2px;width:734.00px;height:11.80px;background:#3a3a3a;"></div>
<div class="a" style="left:33px;top:317.2px;width:37.00px;height:11.60px;background:#3e3e3e;"></div>
<div class="a" style="left:33px;top:317.2px;width:734.00px;height:0.80px;background:#444444;"></div>
<div class="a" style="left:33px;top:328.6px;width:734.00px;height:0.80px;background:#2a2a2a;"></div>
<div class="t" style="top:319.93px;font-size:8.00px;color:#cbcbcb;transform:scaleX(0.9375);transform-origin:0 0;left:36.00px;">Simple</div>
<svg class="a" style="left:61.8px;top:321.5px" width="5" height="3" viewBox="0 0 5 3"><path d="M0 0 L5 0 L2.5 3 Z" fill="#c4c4c4"/></svg>
<div class="a" style="left:70.5px;top:317.2px;width:1.00px;height:11.40px;background:#2a2a2a;"></div>
<div class="t" style="top:319.93px;font-size:8.00px;color:#cbcbcb;transform:scaleX(0.9375);transform-origin:0 0;left:76.70px;">Install Memory Profiler Package (Version 1.1.0)</div>
<div class="a" style="left:234.5px;top:317.2px;width:1.00px;height:11.40px;background:#2a2a2a;"></div>
<svg class="a" style="left:236.8px;top:318.6px" width="8.4" height="8.6" viewBox="0 0 8.4 8.6"><path d="M4.2 0.3 Q4.6 0.3 4.9 0.9 L8.2 7.6 Q8.3 8.3 7.6 8.3 H0.8 Q0.1 8.3 0.2 7.6 L3.5 0.9 Q3.8 0.3 4.2 0.3 Z" fill="#e8a818" stroke="#1c2a3a" stroke-width="0.4"/><rect x="3.75" y="2.6" width="0.9" height="3.2" fill="#2a2010"/><rect x="3.75" y="6.4" width="0.9" height="0.9" fill="#2a2010"/></svg>
<div class="t" style="top:319.93px;font-size:8.00px;color:#cbcbcb;transform:scaleX(0.9375);transform-origin:0 0;left:246.80px;">Memory usage in the Editor is not the same as it would be in a Player</div>
<div class="a" style="left:33px;top:329.2px;width:734.00px;height:299.80px;background:#383838;"></div>
<div class="a" style="left:713px;top:333.4px;width:8.00px;height:8.40px;background:#2b2b2b;border-radius:1.5px"></div>
<div class="t" style="top:333.53px;font-size:8.00px;color:#cbcbcb;transform:scaleX(0.9375);transform-origin:0 0;left:722.60px;">Normalized</div>
<div class="t" style="top:349.36px;font-size:7.79px;color:#d6d6d6;transform:scaleX(0.9375);transform-origin:0 0;font-weight:bold;left:39.40px;">Total Committed Memory</div>
<div class="t" style="top:348.93px;font-size:8.00px;color:#cbcbcb;transform:scaleX(0.9375);transform-origin:100% 0;right:91.20px;">Total: 2.03 GB</div>
<div class="a" style="left:711.1px;top:348.2px;width:0.90px;height:8.40px;background:#c8c8c8;"></div>
<div class="t" style="top:348.93px;font-size:8.00px;color:#cbcbcb;transform:scaleX(0.9375);transform-origin:100% 0;right:39.70px;">Max: 2.04 GB</div>
<div class="a" style="left:38px;top:356px;width:720.20px;height:16.00px;background:#1c2640;border-radius:2px"></div>
<div class="a" style="left:38.75px;top:357px;width:718.75px;height:14.00px;background:#f09c1c;border-radius:1.5px"></div>
<div class="a" style="left:39.75px;top:358px;width:716.75px;height:12.00px;background:#0c0a06;"></div>
<div class="a" style="left:40.25px;top:358.8px;width:473.35px;height:10.40px;background:#f4a222;"></div>
<div class="a" style="left:514.4px;top:358.8px;width:241.60px;height:10.40px;background:#47300c;"></div>
<div class="a" style="left:759.5px;top:358px;width:1.50px;height:12.50px;background:#6c7888;"></div>
<div class="a" style="left:38.5px;top:372.3px;width:209.00px;height:1.00px;background:#565656;"></div>
<div class="a" style="left:40.1px;top:374.8px;width:8.00px;height:6.40px;background:#f0a020;border-radius:1px"></div>
<div class="a" style="left:41.1px;top:375.8px;width:3.50px;height:4.40px;background:#f4a222;"></div>
<div class="a" style="left:44.7px;top:376.5px;width:2.20px;height:3.10px;background:#111;"></div>
<div class="t" style="top:374.53px;font-size:8.00px;color:#cbcbcb;transform:scaleX(0.9375);transform-origin:0 0;left:51.25px;">Tracked Memory</div>
<div class="t" style="top:374.53px;font-size:8.00px;color:#7c7c7c;transform:scaleX(0.9375);transform-origin:0 0;font-style:italic;left:109.43px;">(In use / Reserved)</div>
<div class="t" style="top:374.53px;font-size:8.00px;color:#cbcbcb;transform:scaleX(0.9375);transform-origin:100% 0;right:554.20px;">1.52 / 2.30 GB</div>
<div class="a" style="left:38.5px;top:382.6px;width:209.00px;height:1.00px;background:#404040;"></div>
<div class="a" style="left:40.1px;top:384.4px;width:8.00px;height:6.40px;background:#2c2c2c;border-radius:1.5px;border:1px solid #6a6a6a"></div>
<div class="t" style="top:384.33px;font-size:8.00px;color:#cbcbcb;transform:scaleX(0.9375);transform-origin:0 0;left:51.25px;">Untracked Memory</div>
<div class="t" style="top:384.33px;font-size:8.00px;color:#cbcbcb;transform:scaleX(0.9375);transform-origin:100% 0;right:554.20px;">Unknown</div>
<div class="a" style="left:38.5px;top:392.5px;width:209.00px;height:1.00px;background:#565656;"></div>
<div class="t" style="top:403.61px;font-size:7.79px;color:#d6d6d6;transform:scaleX(0.9375);transform-origin:0 0;font-weight:bold;left:39.40px;">Total Memory Breakdown</div>
<div class="t" style="top:402.93px;font-size:8.00px;color:#cbcbcb;transform:scaleX(0.9375);transform-origin:100% 0;right:91.20px;">Total: 2.03 GB</div>
<div class="a" style="left:711.1px;top:402.2px;width:0.90px;height:8.40px;background:#c8c8c8;"></div>
<div class="t" style="top:402.93px;font-size:8.00px;color:#cbcbcb;transform:scaleX(0.9375);transform-origin:100% 0;right:39.70px;">Max: 2.04 GB</div>
<div class="a" style="left:38.4px;top:410.6px;width:191.60px;height:14.80px;background:#2a1a3a;border-radius:2px"></div>
<div class="a" style="left:38.75px;top:411px;width:190.65px;height:14.00px;background:#7c9c10;border-radius:1.5px"></div>
<div class="a" style="left:39.75px;top:412px;width:188.65px;height:12.00px;background:#0c0e04;"></div>
<div class="a" style="left:40.25px;top:412.8px;width:20.35px;height:10.40px;background:#84a40e;"></div>
<div class="a" style="left:61.4px;top:412.8px;width:166.60px;height:10.40px;background:#283400;"></div>
<div class="a" style="left:231.2px;top:410.4px;width:104.70px;height:15.20px;background:#3a1414;border-radius:2px"></div>
<div class="a" style="left:231.6px;top:411px;width:103.90px;height:14.00px;background:#64dcc4;border-radius:1.5px"></div>
<div class="a" style="left:336.6px;top:410.6px;width:7.80px;height:14.80px;background:#103a3a;border-radius:2px"></div>
<div class="a" style="left:337px;top:411px;width:7.00px;height:14.00px;background:#d86a6a;border-radius:1.5px"></div>
<div class="a" style="left:345.7px;top:411px;width:1.50px;height:14.00px;background:#f0c830;"></div>
<div class="a" style="left:347.7px;top:410.6px;width:298.10px;height:14.80px;background:#3a2a1a;border-radius:2px"></div>
<div class="a" style="left:348.1px;top:411px;width:297.20px;height:14.00px;background:#3aa2d2;border-radius:1.5px"></div>
<div class="a" style="left:349.1px;top:412px;width:295.20px;height:12.00px;background:#0a1014;"></div>
<div class="a" style="left:349.6px;top:412.8px;width:232.70px;height:10.40px;background:#3aa2cc;"></div>
<div class="a" style="left:583.1px;top:412.8px;width:60.70px;height:10.40px;background:#13303c;"></div>
<div class="a" style="left:647.6px;top:410.6px;width:109.10px;height:14.80px;background:#0c2a22;border-radius:2px"></div>
<div class="a" style="left:648px;top:411px;width:108.30px;height:14.00px;background:#2c6a58;border-radius:1.5px"></div>
<div class="a" style="left:649px;top:412px;width:106.30px;height:12.00px;background:#0a1410;"></div>
<div class="a" style="left:649.5px;top:412.8px;width:101.50px;height:10.40px;background:#357a66;"></div>
<div class="a" style="left:751.8px;top:412.8px;width:3.00px;height:10.40px;background:#10241e;"></div>
<div class="a" style="left:759.5px;top:412px;width:1.50px;height:12.50px;background:#6c7888;"></div>
<div class="a" style="left:38.5px;top:426.6px;width:209.00px;height:1.00px;background:#565656;"></div>
<div class="a" style="left:40.1px;top:429.2px;width:8.00px;height:6.40px;background:#7c9c10;border-radius:1px"></div>
<div class="a" style="left:41.1px;top:430.2px;width:3.50px;height:4.40px;background:#84a40e;"></div>
<div class="a" style="left:44.7px;top:430.9px;width:2.20px;height:3.10px;background:#111;"></div>
<div class="t" style="top:428.73px;font-size:8.00px;color:#cbcbcb;transform:scaleX(0.9375);transform-origin:0 0;left:51.25px;">Managed Heap</div>
<div class="t" style="top:428.73px;font-size:8.00px;color:#7c7c7c;transform:scaleX(0.9375);transform-origin:0 0;font-style:italic;left:104.74px;">(In use / Reserved)</div>
<div class="t" style="top:428.73px;font-size:8.00px;color:#cbcbcb;transform:scaleX(0.9375);transform-origin:100% 0;right:554.20px;">67.7 MB / 0.62 GB</div>
<div class="a" style="left:38.5px;top:436.9px;width:209.00px;height:1.00px;background:#404040;"></div>
<div class="a" style="left:40.1px;top:438.8px;width:8.00px;height:6.40px;background:#64dcc4;border-radius:1px;box-shadow:0 0 0 .5px #3a1414"></div>
<div class="t" style="top:438.23px;font-size:8.00px;color:#cbcbcb;transform:scaleX(0.9375);transform-origin:0 0;left:51.25px;">Graphics &amp; Graphics Driver</div>
<div class="t" style="top:438.23px;font-size:8.00px;color:#cbcbcb;transform:scaleX(0.9375);transform-origin:100% 0;right:554.20px;">344.8 MB</div>
<div class="a" style="left:38.5px;top:446.4px;width:209.00px;height:1.00px;background:#404040;"></div>
<div class="a" style="left:40.1px;top:448.3px;width:8.00px;height:6.40px;background:#d86a6a;border-radius:1px;box-shadow:0 0 0 .5px #103a3a"></div>
<div class="t" style="top:447.83px;font-size:8.00px;color:#cbcbcb;transform:scaleX(0.9375);transform-origin:0 0;left:51.25px;">Audio</div>
<div class="t" style="top:447.83px;font-size:8.00px;color:#cbcbcb;transform:scaleX(0.9375);transform-origin:100% 0;right:554.20px;">18.7 MB</div>
<div class="a" style="left:38.5px;top:456px;width:209.00px;height:1.00px;background:#404040;"></div>
<div class="a" style="left:40.1px;top:457.9px;width:8.00px;height:6.40px;background:#f0cc40;border-radius:1px;box-shadow:0 0 0 .5px #101a3a"></div>
<div class="t" style="top:457.43px;font-size:8.00px;color:#cbcbcb;transform:scaleX(0.9375);transform-origin:0 0;left:51.25px;">Video</div>
<div class="t" style="top:457.43px;font-size:8.00px;color:#cbcbcb;transform:scaleX(0.9375);transform-origin:100% 0;right:554.20px;">2.1 KB</div>
<div class="a" style="left:38.5px;top:465.6px;width:209.00px;height:1.00px;background:#404040;"></div>
<div class="a" style="left:40.1px;top:467.5px;width:8.00px;height:6.40px;background:#3aa2d2;border-radius:1px"></div>
<div class="a" style="left:41.1px;top:468.5px;width:3.50px;height:4.40px;background:#3aa2cc;"></div>
<div class="a" style="left:44.7px;top:469.2px;width:2.20px;height:3.10px;background:#111;"></div>
<div class="t" style="top:467.03px;font-size:8.00px;color:#cbcbcb;transform:scaleX(0.9375);transform-origin:0 0;left:51.25px;">Other</div>
<div class="t" style="top:467.03px;font-size:8.00px;color:#7c7c7c;transform:scaleX(0.9375);transform-origin:0 0;font-style:italic;left:72.21px;">(In use / Reserved)</div>
<div class="t" style="top:467.03px;font-size:8.00px;color:#cbcbcb;transform:scaleX(0.9375);transform-origin:100% 0;right:554.20px;">0.76 / 0.97 GB</div>
<div class="a" style="left:38.5px;top:475.2px;width:209.00px;height:1.00px;background:#404040;"></div>
<div class="a" style="left:40.1px;top:477.1px;width:8.00px;height:6.40px;background:#2c6a58;border-radius:1px"></div>
<div class="a" style="left:41.1px;top:478.1px;width:3.50px;height:4.40px;background:#357a66;"></div>
<div class="a" style="left:44.7px;top:478.8px;width:2.20px;height:3.10px;background:#111;"></div>
<div class="t" style="top:476.63px;font-size:8.00px;color:#cbcbcb;transform:scaleX(0.9375);transform-origin:0 0;left:51.25px;">Profiler</div>
<div class="t" style="top:476.63px;font-size:8.00px;color:#7c7c7c;transform:scaleX(0.9375);transform-origin:0 0;font-style:italic;left:77.21px;">(In use / Reserved)</div>
<div class="t" style="top:476.63px;font-size:8.00px;color:#cbcbcb;transform:scaleX(0.9375);transform-origin:100% 0;right:554.20px;">342.7 / 363.0 MB</div>
<div class="a" style="left:38.5px;top:484.8px;width:209.00px;height:1.00px;background:#404040;"></div>
<div class="a" style="left:40.1px;top:486.6px;width:8.00px;height:6.40px;background:#2c2c2c;border-radius:1.5px;border:1px solid #6a6a6a"></div>
<div class="t" style="top:486.23px;font-size:8.00px;color:#cbcbcb;transform:scaleX(0.9375);transform-origin:0 0;left:51.25px;">Untracked Memory</div>
<div class="t" style="top:486.23px;font-size:8.00px;color:#cbcbcb;transform:scaleX(0.9375);transform-origin:100% 0;right:554.20px;">Unknown</div>
<div class="a" style="left:38.5px;top:494.6px;width:209.00px;height:1.00px;background:#565656;"></div>
<div class="t" style="top:507.21px;font-size:7.79px;color:#d6d6d6;transform:scaleX(0.9375);transform-origin:0 0;font-weight:bold;left:39.40px;">Objects stats</div>
<div class="t" style="top:515.23px;font-size:8.00px;color:#8a8a8a;transform:scaleX(0.9375);transform-origin:100% 0;right:592.00px;">Count</div>
<div class="t" style="top:515.23px;font-size:8.00px;color:#8a8a8a;transform:scaleX(0.9375);transform-origin:100% 0;right:553.00px;">Size</div>
<div class="a" style="left:39.5px;top:526.2px;width:208.50px;height:1.00px;background:#565656;"></div>
<div class="t" style="top:527.68px;font-size:8.00px;color:#cbcbcb;transform:scaleX(0.9375);transform-origin:0 0;left:40.00px;">Textures</div>
<div class="t" style="top:527.68px;font-size:8.00px;color:#cbcbcb;transform:scaleX(0.9375);transform-origin:100% 0;right:592.00px;">862</div>
<div class="t" style="top:527.68px;font-size:8.00px;color:#cbcbcb;transform:scaleX(0.9375);transform-origin:100% 0;right:553.00px;">380.0 MB</div>
<div class="a" style="left:39.5px;top:535.95px;width:208.50px;height:1.00px;background:#404040;"></div>
<div class="t" style="top:537.18px;font-size:8.00px;color:#cbcbcb;transform:scaleX(0.9375);transform-origin:0 0;left:40.00px;">Meshes</div>
<div class="t" style="top:537.18px;font-size:8.00px;color:#cbcbcb;transform:scaleX(0.9375);transform-origin:100% 0;right:592.00px;">82</div>
<div class="t" style="top:537.18px;font-size:8.00px;color:#cbcbcb;transform:scaleX(0.9375);transform-origin:100% 0;right:553.00px;">30.8 MB</div>
<div class="a" style="left:39.5px;top:545.45px;width:208.50px;height:1.00px;background:#404040;"></div>
<div class="t" style="top:546.68px;font-size:8.00px;color:#cbcbcb;transform:scaleX(0.9375);transform-origin:0 0;left:40.00px;">Materials</div>
<div class="t" style="top:546.68px;font-size:8.00px;color:#cbcbcb;transform:scaleX(0.9375);transform-origin:100% 0;right:592.00px;">77</div>
<div class="t" style="top:546.68px;font-size:8.00px;color:#cbcbcb;transform:scaleX(0.9375);transform-origin:100% 0;right:553.00px;">121.1 KB</div>
<div class="a" style="left:39.5px;top:554.95px;width:208.50px;height:1.00px;background:#404040;"></div>
<div class="t" style="top:556.18px;font-size:8.00px;color:#cbcbcb;transform:scaleX(0.9375);transform-origin:0 0;left:40.00px;">Animation Clips</div>
<div class="t" style="top:556.18px;font-size:8.00px;color:#cbcbcb;transform:scaleX(0.9375);transform-origin:100% 0;right:592.00px;">6</div>
<div class="t" style="top:556.18px;font-size:8.00px;color:#cbcbcb;transform:scaleX(0.9375);transform-origin:100% 0;right:553.00px;">1.0 MB</div>
<div class="a" style="left:39.5px;top:564.45px;width:208.50px;height:1.00px;background:#404040;"></div>
<div class="t" style="top:565.68px;font-size:8.00px;color:#cbcbcb;transform:scaleX(0.9375);transform-origin:0 0;left:40.00px;">Assets</div>
<div class="t" style="top:565.68px;font-size:8.00px;color:#cbcbcb;transform:scaleX(0.9375);transform-origin:100% 0;right:592.00px;">5436</div>
<div class="t" style="top:565.68px;font-size:8.00px;color:#cbcbcb;transform:scaleX(0.9375);transform-origin:100% 0;right:553.00px;">-</div>
<div class="a" style="left:39.5px;top:573.95px;width:208.50px;height:1.00px;background:#404040;"></div>
<div class="t" style="top:575.18px;font-size:8.00px;color:#cbcbcb;transform:scaleX(0.9375);transform-origin:0 0;left:40.00px;">Game Objects</div>
<div class="t" style="top:575.18px;font-size:8.00px;color:#cbcbcb;transform:scaleX(0.9375);transform-origin:100% 0;right:592.00px;">510</div>
<div class="t" style="top:575.18px;font-size:8.00px;color:#cbcbcb;transform:scaleX(0.9375);transform-origin:100% 0;right:553.00px;">-</div>
<div class="a" style="left:39.5px;top:583.45px;width:208.50px;height:1.00px;background:#404040;"></div>
<div class="t" style="top:584.68px;font-size:8.00px;color:#cbcbcb;transform:scaleX(0.9375);transform-origin:0 0;left:40.00px;">Scene Objects</div>
<div class="t" style="top:584.68px;font-size:8.00px;color:#cbcbcb;transform:scaleX(0.9375);transform-origin:100% 0;right:592.00px;">1854</div>
<div class="t" style="top:584.68px;font-size:8.00px;color:#cbcbcb;transform:scaleX(0.9375);transform-origin:100% 0;right:553.00px;">-</div>
<div class="a" style="left:39.5px;top:593.5px;width:208.50px;height:1.00px;background:#565656;"></div>
<div class="t" style="top:603.43px;font-size:8.00px;color:#cbcbcb;transform:scaleX(0.9375);transform-origin:0 0;left:40.00px;">GC allocated in frame</div>
<div class="t" style="top:603.43px;font-size:8.00px;color:#cbcbcb;transform:scaleX(0.9375);transform-origin:100% 0;right:592.00px;">20</div>
<div class="t" style="top:603.43px;font-size:8.00px;color:#cbcbcb;transform:scaleX(0.9375);transform-origin:100% 0;right:553.00px;">1.1 KB</div>
</div>
<div id="rim"></div>
</body></html>
